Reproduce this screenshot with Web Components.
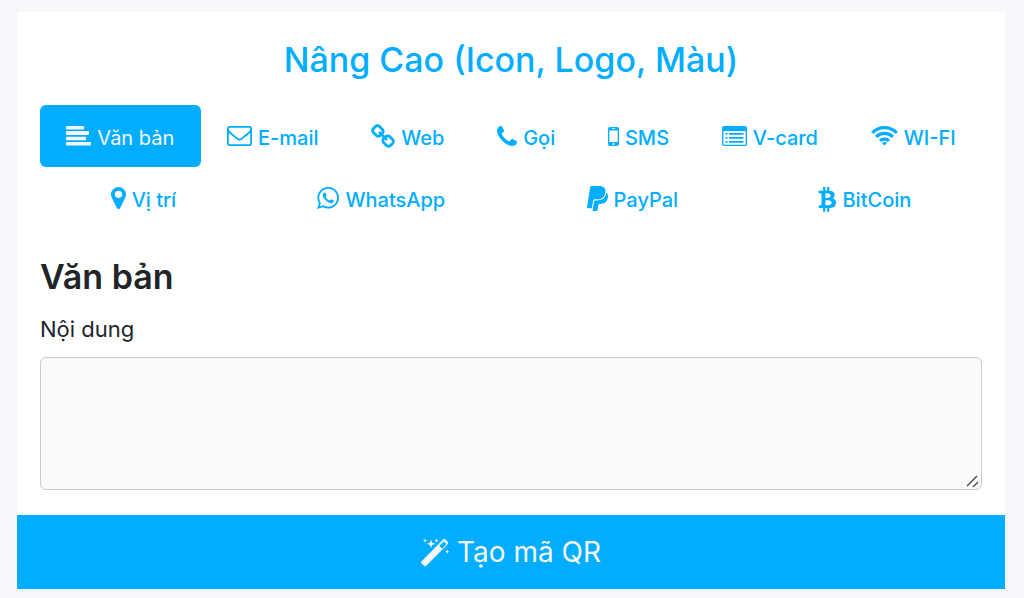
<!DOCTYPE html>
<html lang="vi">
<head>
<meta charset="utf-8">
<meta name="viewport" content="width=device-width, initial-scale=1">
<title>Tạo mã QR</title>
<style>
  body { margin: 0; background: #f5f7fa; color: #212529; font-family: Inter, "Liberation Sans", sans-serif; }
</style>
</head>
<body>
<qr-card>
  <span slot="title">Nâng Cao (Icon, Logo, Màu)</span>
  <qr-tabs slot="tabs">
    <qr-tab icon="align" active>Văn bản</qr-tab>
    <qr-tab icon="mail">E-mail</qr-tab>
    <qr-tab icon="link">Web</qr-tab>
    <qr-tab icon="phone">Gọi</qr-tab>
    <qr-tab icon="mobile">SMS</qr-tab>
    <qr-tab icon="card">V-card</qr-tab>
    <qr-tab icon="wifi">WI-FI</qr-tab>
    <qr-tab icon="pin">Vị trí</qr-tab>
    <qr-tab icon="whatsapp">WhatsApp</qr-tab>
    <qr-tab icon="paypal">PayPal</qr-tab>
    <qr-tab icon="bitcoin">BitCoin</qr-tab>
  </qr-tabs>
  <qr-text-field label="Nội dung"><span slot="heading">Văn bản</span></qr-text-field>
  <qr-submit slot="action">Tạo mã QR</qr-submit>
</qr-card>

<script>
// name: [width, height, viewBox, markup]
const ICONS = {
  align: [25, 20, '0 0 25 20', '<rect width="18" height="3.500" rx="1"/><rect y="5" width="23" height="4" rx="1"/><rect y="10.800" width="20" height="3.500" rx="1"/><rect y="16" width="25" height="3.600" rx="1"/>'],
  mail: [25, 20, '0 256 1792 1408', '<path d="M1664 1504v-768q-32 36-69 66-268 206-426 338-51 43-83 67t-86.500 48.500-102.500 24.500h-2q-48 0-102.500-24.500t-86.500-48.500-83-67q-158-132-426-338-37-30-69-66v768q0 13 9.500 22.500t22.500 9.500h1472q13 0 22.500-9.500t9.500-22.500zm0-1051v-24.500l-.5-13-3-12.500-5.500-9-9-7.500-14-2.500h-1472q-13 0-22.500 9.500t-9.500 22.500q0 168 147 284 193 152 401 317 6 5 35 29.500t46 37.500 44.500 31.500 50.500 27.500 43 9h2q20 0 43-9t50.500-27.500 44.500-31.500 46-37.500 35-29.500q208-165 401-317 54-43 100.500-115.500t46.500-131.500zm128-37v1088q0 66-47 113t-113 47h-1472q-66 0-113-47t-47-113v-1088q0-66 47-113t113-47h1472q66 0 113 47t47 113z"/>'],
  link: [24, 24, '64 0 1664 1664', '<path d="M1520 1216q0-40-28-68l-208-208q-28-28-68-28-42 0-72 32 3 3 19 18.500t21.500 21.500 15 19 13 25.500 3.500 27.500q0 40-28 68t-68 28q-15 0-27.500-3.500t-25.500-13-19-15-21.500-21.500-18.500-19q-33 31-33 73 0 40 28 68l206 207q27 27 68 27 40 0 68-26l147-146q28-28 28-67zm-703-705q0-40-28-68l-206-207q-28-28-68-28-39 0-68 27l-147 146q-28 28-28 67 0 40 28 68l208 208q27 27 68 27 42 0 72-31-3-3-19-18.500t-21.500-21.500-15-19-13-25.500-3.500-27.500q0-40 28-68t68-28q15 0 27.500 3.500t25.500 13 19 15 21.500 21.500 18.500 19q33-31 33-73zm895 705q0 120-85 203l-147 146q-83 83-203 83-121 0-204-85l-206-207q-83-83-83-203 0-123 88-209l-88-88q-86 88-208 88-120 0-204-84l-208-208q-84-84-84-204t85-203l147-146q83-83 203-83 121 0 204 85l206 207q83 83 83 203 0 123-88 209l88 88q86-88 208-88 120 0 204 84l208 208q84 84 84 204z"/>'],
  phone: [20, 20, '192 128 1408 1408', '<path d="M1600 1240q0 27-10 70.500t-21 68.500q-21 50-122 106-94 51-186 51-27 0-53-3.500t-57.500-12.500-47-14.500-55.500-20.500-49-18q-98-35-175-83-127-79-264-216t-216-264q-48-77-83-175-3-9-18-49t-20.500-55.500-14.500-47-12.500-57.500-3.500-53q0-92 51-186 56-101 106-122 25-11 68.500-21t70.500-10q14 0 21 3 18 6 53 76 11 19 30 54t35 63.500 31 53.500q3 4 17.500 25t21.500 35.500 7 28.500q0 20-28.500 50t-62 55-62 53-28.500 46q0 9 5 22.500t8.500 20.500 14 24 11.500 19q76 137 174 235t235 174q2 1 19 11.500t24 14 20.500 8.500 22.500 5q18 0 46-28.500t53-62 55-62 50-28.500q14 0 28.500 7t35.500 21.500 25 17.500q25 15 53.500 31t63.500 35 54 30q70 35 76 53 3 7 3 21z"/>'],
  mobile: [11, 19, '0 0 11 19', '<path fill-rule="evenodd" d="M2 0h7a2 2 0 0 1 2 2v15a2 2 0 0 1-2 2H2a2 2 0 0 1-2-2V2a2 2 0 0 1 2-2zM1.300 3.500v11.500h8.400V3.500zM4 1.300v.8h3v-.8zM5.500 16a1.100 1.100 0 1 0 0 2.200 1.100 1.100 0 0 0 0-2.200z"/>'],
  card: [25, 20, '0 0 25 20', '<path fill-rule="evenodd" d="M2 0h21a2 2 0 0 1 2 2v16a2 2 0 0 1-2 2H2a2 2 0 0 1-2-2V2a2 2 0 0 1 2-2zM1.400 5v13q0 .7.7.7h20.800q.7 0 .7-.7V5z"/><path d="M3.500 7h2v1.700h-2zM7 7h14.500v1.700H7zM3.500 11h2v1.700h-2zM7 11h14.500v1.700H7zM3.500 15h2v1.700h-2zM7 15h14.500v1.700H7z"/>'],
  wifi: [27, 20, '0 0 27 20', '<g fill="none" stroke="currentColor" stroke-width="3.300"><path d="M1.200 6.800a17.400 17.400 0 0 1 24.600 0M5.100 10.900a11.900 11.900 0 0 1 16.800 0M9 14.900a6.400 6.400 0 0 1 9 0"/></g><path d="M13.500 19.500l-2.600-2.600q2.600-2 5.200 0z"/>'],
  pin: [15, 22, '384 128 1024 1536', '<path d="M1152 640q0-106-75-181t-181-75-181 75-75 181 75 181 181 75 181-75 75-181zm256 0q0 109-33 179l-364 774q-16 33-47.500 52t-67.500 19-67.500-19-46.500-52l-365-774q-33-70-33-179 0-212 150-362t362-150 362 150 150 362z"/>'],
  whatsapp: [22, 22, '128 122 1536 1542', '<path d="M1113 974q13 0 97.500 44t89.500 53q2 5 2 15 0 33-17 76-16 39-71 65.500t-102 26.500q-57 0-190-62-98-45-170-118t-148-185q-72-107-71-194v-8q3-91 74-158 24-22 52-22 6 0 18 1.500t19 1.500q19 0 26.500 6.500t15.500 27.500q8 20 33 88t25 75q0 21-34.500 57.500t-34.500 46.500q0 7 5 15 34 73 102 137 56 53 151 101 12 7 22 7 15 0 54-48.500t52-48.500zm-203 530q127 0 243.500-50t200.500-134 134-200.500 50-243.500-50-243.500-134-200.500-200.500-134-243.500-50-243.500 50-200.500 134-134 200.500-50 243.500q0 203 120 368l-79 233 242-77q158 104 345 104zm0-1382q153 0 292.500 60t240.500 161 161 240.500 60 292.500-60 292.500-161 240.500-240.500 161-292.500 60q-195 0-365-94l-417 134 136-405q-108-178-108-389 0-153 60-292.500t161-240.500 240.500-161 292.500-60z"/>'],
  paypal: [21, 25, '0 28 384 456', '<path d="M111.400 295.900c-3.500 19.200-17.400 108.700-21.500 134-.3 1.800-1 2.500-3 2.500H12.300c-7.600 0-13.100-6.600-12.100-13.900L58.800 46.600c1.500-9.600 10.100-16.900 20-16.900 152.300 0 165.100-3.700 204 11.400 60.100 23.300 65.600 79.500 44 140.300-21.500 62.600-72.500 89.500-140.100 90.300-43.400.7-69.500-7-75.300 24.200zM357.100 152c-1.800-1.300-2.500-1.800-3 1.300-2 11.400-5.100 22.500-8.800 33.600-39.900 113.800-150.500 103.900-204.500 103.900-6.100 0-10.100 3.300-10.900 9.400-22.600 140.400-27.100 169.700-27.100 169.700-1 7.100 3.500 12.900 10.600 12.900h63.500c8.600 0 15.700-6.300 17.400-14.900.7-5.400-1.100 6.100 14.400-91.300 4.600-22 14.300-19.700 29.300-19.700 71 0 126.400-28.800 142.900-112.300 6.500-34.800 4.600-71.400-23.800-92.600z"/>'],
  bitcoin: [17, 23, '340 128 1180 1536', '<path d="M1427 635q18 182-131 258 117 28 175 103t45 214q-7 71-32.500 125t-64.500 89-97 58.500-121.500 34.500-145.500 15v255h-154v-251q-80 0-122-1v252h-154v-255q-18 0-54-.5t-55-.5h-200l31-183h111q50 0 58-51v-402h16q-6-1-16-1v-287q-13-68-89-68h-111v-164l212 1q64 0 97-1v-252h154v247q82-2 122-2v-245h154v252q79 7 140 22.500t113 45 82.500 78 36.500 114.500zm-215 545q0-36-15-64t-37-46-57.500-30.500-65.500-18.500-74-9-69-3-64.500 1-47.500 1v338q8 0 37 .5t48 .5 53-1.500 58.500-4 57-8.500 55.500-14 47.500-21 39.500-30 24.500-40 9.500-51zm-71-476q0-33-12.500-58.500t-30.500-42-48-28-55-16.500-61.500-8-58-2.500-54 1-39.500.5v307q5 0 34.500.5t46.500 0 50-2 55-5.500 51.500-11 48.500-18.500 37-27 27-38.500 9-51z"/>'],
  magic: [28, 28, '0 0 28 28', '<path fill-rule="evenodd" d="M.4 23.600 22.300 1.300q.9-.9 1.800 0l2.800 2.800q.9.900 0 1.800L5 27.900q-.9.800-1.800 0L.4 25.300q-.8-.8 0-1.700zM18.300 7.800l2.900 2.900 4.200-4.700-2.400-2.500z"/><path d="M10 1.500l1.100 3.200 3.200 1.100-3.200 1.100L10 10.100 8.900 6.900 5.700 5.800l3.200-1.100zM4 .5l.6 1.500 1.500.6-1.500.6L4 4.700l-.6-1.500-1.500-.6L3.400 2zM15.500.5l.6 1.500 1.500.6-1.500.6-.6 1.500-.6-1.500-1.500-.6 1.500-.6zM26.300 11.500l.6 1.600 1.500.6-1.500.6-.6 1.500-.6-1.500-1.500-.6 1.500-.6z"/>']
};

class QrIcon extends HTMLElement {
  connectedCallback() {
    const [w, h, box, body] = ICONS[this.getAttribute('name')];
    this.attachShadow({ mode: 'open' }).innerHTML = `
      <style>:host { display: inline-flex; flex: none; } svg { display: block; overflow: visible; }</style>
      <svg width="${w}" height="${h}" viewBox="${box}" preserveAspectRatio="none" fill="currentColor" aria-hidden="true">${body}</svg>`;
  }
}

class QrTab extends HTMLElement {
  connectedCallback() {
    this.attachShadow({ mode: 'open' }).innerHTML = `
      <style>
        :host { display: block; flex: 1 1 auto; }
        a { display: flex; align-items: center; justify-content: center; gap: 6px; box-sizing: border-box;
            height: 62px; padding: 4px 24px 0; border-radius: 6px; color: #00adff; text-decoration: none;
            font-size: 20px; font-weight: 500; line-height: 30px; white-space: nowrap; }
        qr-icon { padding-bottom: 4px; }
        :host([active]) a { background: #00adff; color: #f5f7fa; font-weight: 400; }
      </style>
      <a href="#"><qr-icon name="${this.getAttribute('icon')}"></qr-icon><span><slot></slot></span></a>`;
  }
}

class QrTabs extends HTMLElement {
  connectedCallback() {
    this.attachShadow({ mode: 'open' }).innerHTML = `
      <style>:host { display: block; } nav { display: flex; flex-wrap: wrap; }</style>
      <nav><slot></slot></nav>`;
  }
}

class QrTextField extends HTMLElement {
  connectedCallback() {
    this.attachShadow({ mode: 'open' }).innerHTML = `
      <style>
        :host { display: block; }
        h2 { margin: 0 0 14px; font-size: 34px; line-height: 44px; font-weight: 600; }
        label { display: block; margin-bottom: 12px; font-size: 22px; line-height: 32px; }
        textarea { display: block; box-sizing: border-box; width: 100%; height: 133px; padding: 8px 16px;
          border: 1px solid #c5cbd1; border-radius: 6px; background: #fafafa; color: inherit; font: inherit;
          font-size: 22px; resize: vertical; outline: none; }
        textarea::-webkit-resizer { background: url("data:image/svg+xml,%3Csvg xmlns='http://www.w3.org/2000/svg' width='15' height='15'%3E%3Cpath d='M1 12 11 2M7 13l5-5' stroke='%23555' stroke-width='1.500'/%3E%3C/svg%3E") no-repeat; }
      </style>
      <h2><slot name="heading"></slot></h2>
      <label for="content">${this.getAttribute('label')}</label>
      <textarea id="content"></textarea>`;
  }
}

class QrSubmit extends HTMLElement {
  connectedCallback() {
    this.attachShadow({ mode: 'open' }).innerHTML = `
      <style>
        :host { display: block; }
        button { display: flex; align-items: center; justify-content: center; gap: 8px; width: 100%; height: 74px;
          padding: 0; border: 0; background: #00adff; color: #f5f7fa; font: inherit; font-size: 28px; line-height: 44px; cursor: pointer; }
      </style>
      <button type="submit"><qr-icon name="magic"></qr-icon><span><slot></slot></span></button>`;
  }
}

class QrCard extends HTMLElement {
  connectedCallback() {
    this.attachShadow({ mode: 'open' }).innerHTML = `
      <style>
        :host { display: block; padding: 12px 19px 8px 17px; }
        form { background: #fff; }
        .body { padding: 26px 23px 25px; }
        h1 { margin: 0 0 23px; color: #00adff; font-size: 34px; line-height: 44px; font-weight: 500; text-align: center; }
        ::slotted(qr-tabs) { margin-bottom: 26px; }
      </style>
      <form>
        <div class="body">
          <h1><slot name="title"></slot></h1>
          <slot name="tabs"></slot>
          <slot></slot>
        </div>
        <slot name="action"></slot>
      </form>`;
  }
}

customElements.define('qr-icon', QrIcon);
customElements.define('qr-tab', QrTab);
customElements.define('qr-tabs', QrTabs);
customElements.define('qr-text-field', QrTextField);
customElements.define('qr-submit', QrSubmit);
customElements.define('qr-card', QrCard);
</script>
</body>
</html>
